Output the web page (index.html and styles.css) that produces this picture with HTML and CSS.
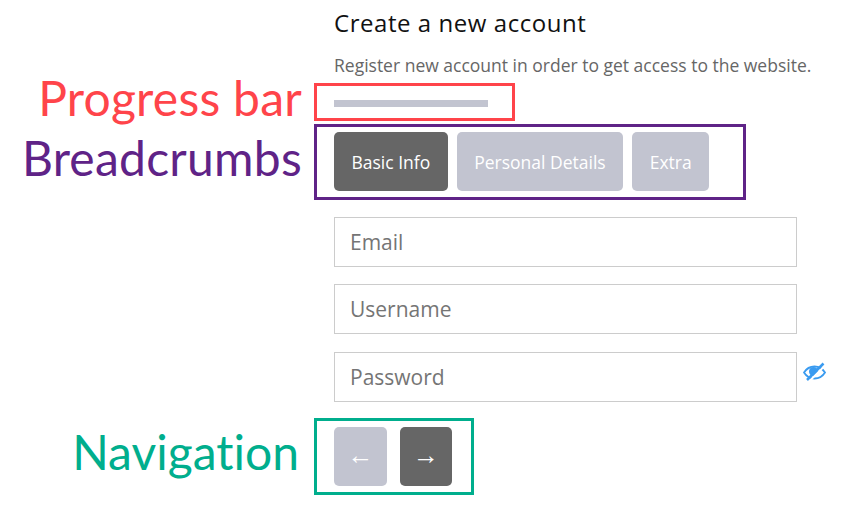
FILE: index.html
```html
<!DOCTYPE html>
<html lang="en">
<head>
  <meta charset="UTF-8">
  <meta name="viewport" content="width=device-width, initial-scale=1.0">
  <title>Create a new account</title>
  <link rel="stylesheet" href="styles.css">
</head>
<body>
  <div class="page">
    <div class="intro">
      <h1>Create a new account</h1>
      <p>Register new account in order to get access to the website.</p>
    </div>

    <!-- Progress bar -->
    <div class="row row-progress">
      <div class="note note-red">Progress bar</div>
      <div class="frame frame-red">
        <div class="progress"></div>
      </div>
    </div>

    <!-- Breadcrumbs -->
    <div class="row row-crumbs">
      <div class="note note-purple">Breadcrumbs</div>
      <div class="frame frame-purple">
        <div class="tab active">Basic Info</div>
        <div class="tab">Personal Details</div>
        <div class="tab">Extra</div>
      </div>
    </div>

    <form class="fields">
      <input class="field" type="text" placeholder="Email">
      <input class="field" type="text" placeholder="Username">
      <div class="password-line">
        <input class="field" type="password" placeholder="Password">
        <svg class="eye" width="24" height="20" viewBox="0 0 24 20" fill="none" stroke="#3a9bf0" stroke-width="1.800">
          <path d="M1 10.500C3.500 6.500 7 4.500 11.500 4.500s8 2 10.500 6c-2.500 4-6 6-10.500 6s-8-2-10.500-6z"/>
          <circle cx="10.500" cy="9.500" r="4.500" fill="#3a9bf0" stroke="none"/>
          <path d="M6 19.500 22.500 3" stroke="#fff" stroke-width="2"/>
          <path d="M4 18 20.500 1.500" stroke-width="2.500"/>
        </svg>
      </div>
    </form>

    <!-- Navigation -->
    <div class="row row-nav">
      <div class="note note-green">Navigation</div>
      <div class="frame frame-green">
        <button class="nav-btn prev" type="button">←</button>
        <button class="nav-btn next" type="button">→</button>
      </div>
    </div>
  </div>
</body>
</html>
```

FILE: styles.css
```css
body {
  margin: 0;
  background: #fff;
  font-family: "Open Sans", sans-serif;
  color: #666;
}

.page {
  width: 850px;
  height: 510px;
  overflow: hidden;
}

.intro {
  padding: 8px 0 0 334px;
}

.intro h1 {
  margin: 0;
  font-size: 24px;
  line-height: 30px;
  font-weight: 400;
  color: #111;
  letter-spacing: 0.55px;
}

.intro p {
  margin: 12px 0 0;
  font-size: 17.500px;
  line-height: 30px;
  color: #666;
}

/* label on the left, framed part on the right */
.row {
  display: grid;
  grid-template-columns: 302px auto;
  column-gap: 12px;
  justify-content: start;
  align-items: center;
}

.row-progress {
  margin-top: 3px;
}

.row-crumbs {
  margin-top: 3px;
}

.row-nav {
  margin-top: 16px;
}

.note {
  font-family: "Lato", sans-serif;
  font-size: 48px;
  line-height: 30px;
  margin-bottom: 8px;
  letter-spacing: 0.25px;
  font-variant-ligatures: none;
  text-align: right;
  white-space: nowrap;
}

.note-red { color: #ff444a; }
.note-purple { color: #5f2387; }
.note-green {
  color: #00ae8d;
  margin-bottom: 10px;
  margin-right: 3px;
  letter-spacing: 0;
}

.frame {
  box-sizing: border-box;
  border: 3px solid;
  padding: 0 17px;
}

.frame-red {
  border-color: #ff444a;
  width: 201px;
  height: 38px;
  display: flex;
  align-items: center;
  padding-top: 3px;
}

.frame-purple {
  border-color: #5f2387;
  width: 432px;
  height: 76px;
  display: flex;
  align-items: flex-start;
  gap: 9px;
  padding-top: 5px;
}

.frame-green {
  border-color: #00ae8d;
  width: 160px;
  height: 77px;
  display: flex;
  align-items: center;
  gap: 13px;
}

.progress {
  width: 154px;
  height: 7px;
  background: #c2c4d0;
}

.tab {
  height: 59px;
  padding: 0 17.500px;
  border-radius: 5px;
  background: #c2c4d0;
  color: #fff;
  font-size: 17.500px;
  line-height: 60px;
  white-space: nowrap;
}

.tab.active {
  background: #666;
}

.fields {
  display: flex;
  flex-direction: column;
  gap: 17px;
  margin: 17px 0 0 334px;
}

.field {
  box-sizing: border-box;
  display: block;
  width: 463px;
  height: 50px;
  padding: 0 15px;
  border: 1px solid #ccc;
  border-radius: 0;
  outline: none;
  background: #fff;
  font-family: "Open Sans", sans-serif;
  font-size: 21px;
  color: #757575;
}

.field::placeholder {
  color: #757575;
  opacity: 1;
}

.password-line {
  display: flex;
  align-items: center;
  gap: 6px;
  margin-top: 1px;
}

.eye {
  margin-top: -10px;
}

.nav-btn {
  width: 53px;
  height: 59px;
  padding: 0 0 2px;
  border: none;
  border-radius: 5px;
  color: #fff;
  font-family: "Liberation Sans", sans-serif;
  font-size: 26px;
  line-height: 57px;
}

.prev { background: #c2c4d0; }
.next { background: #666; width: 52px; }
```
